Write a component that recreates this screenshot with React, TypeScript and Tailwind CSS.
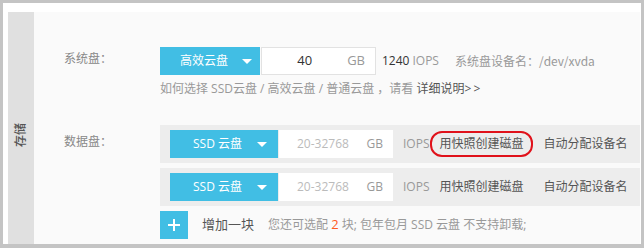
const font = { fontFamily: '"Open Sans", "Noto Sans CJK SC", sans-serif' }

function Caret() {
  return <span className="w-0 h-0 border-l-[5px] border-r-[5px] border-t-[5px] border-l-transparent border-r-transparent border-t-white" />
}

function DataDiskRow({ highlight }: { highlight?: boolean }) {
  return (
    <div className="flex items-center h-[38px] pl-[10px] bg-[#ededed]">
      <div className="flex items-center h-[28px] w-[108px] pl-[23px] bg-[#41bee4] text-white">
        <span>SSD 云盘</span>
        <span className="ml-[15px] flex">
          <Caret />
        </span>
      </div>
      <div className="flex items-center justify-between h-[28px] w-[114px] ml-[1px] pl-[18px] pr-[10px] bg-white">
        <span className="text-[#bbbbbb]">20-32768</span>
        <span className="text-[#999999]">GB</span>
      </div>
      <span className="ml-[10px] text-[#999999]">IOPS</span>
      <span
        className={
          "ml-[1px] flex items-center h-[26px] px-[7px] rounded-[12px] border-2 text-[#555555] " +
          (highlight ? "border-[#e0121b]" : "border-transparent")
        }
      >
        用快照创建磁盘
      </span>
      <span className="ml-[11px] text-[#555555]">自动分配设备名</span>
    </div>
  )
}

export default function App() {
  return (
    <div className="w-[644px] h-[248px] bg-[#c4c4c4] pt-[3px] pl-[3px] pr-[3px] pb-[4px] text-[12px]" style={font}>
      <div className="h-full bg-white pt-[9px] pl-[5px] pr-[1px]">
        <div className="flex h-[232px]">
          {/* side label */}
          <div className="w-[26px] bg-[#e0e0e0] flex flex-col items-center pt-[115px]">
            <span className="-rotate-90 leading-[16px] font-medium text-[#555555]">存储</span>
          </div>

          <div className="flex-1 bg-[#fafafa] pl-[30px] pt-[35px]">
            {/* system disk */}
            <div className="flex">
              <div className="w-[96px] pt-[3px] text-[#888888]">系统盘：</div>
              <div className="flex-1">
                <div className="flex items-center h-[28px]">
                  <div className="flex items-center h-[28px] w-[100px] pl-[20px] bg-[#41bee4] text-white">
                    <span>高效云盘</span>
                    <span className="ml-[14px] flex">
                      <Caret />
                    </span>
                  </div>
                  <div className="flex items-center justify-end h-[28px] w-[115px] ml-[1px] pr-[10px] bg-white border border-[#e2e2e2]">
                    <span className="text-[#333333] text-[13px]">40</span>
                    <span className="ml-[35px] text-[#999999] text-[13px]">GB</span>
                  </div>
                  <span className="ml-[6px] text-[#333333]">1240</span>
                  <span className="ml-[3px] text-[#999999]">IOPS</span>
                  <span className="ml-[16px] text-[#999999] font-['Noto_Sans_CJK_SC',sans-serif]">系统盘设备名：/dev/xvda</span>
                </div>
                <div className="mt-[5px] leading-[18px] text-[#999999]">
                  如何选择 SSD云盘 / 高效云盘 / 普通云盘 ，请看 <span className="text-[#555555]">详细说明</span>
                  <span className="text-[#555555] tracking-[2px]">&gt;&gt;</span>
                </div>
              </div>
            </div>

            {/* data disk */}
            <div className="flex mt-[27px]">
              <div className="w-[96px] pt-[8px] text-[#888888]">数据盘：</div>
              <div className="flex-1 flex flex-col gap-[5px]">
                <DataDiskRow highlight />
                <DataDiskRow />
                <div className="flex items-center h-[28px]">
                  <div className="flex items-center justify-center w-[28px] h-[28px] bg-[#41bee4]">
                    <svg width="14" height="14" viewBox="0 0 14 14">
                      <path d="M7 1v12M1 7h12" stroke="white" strokeWidth="2" />
                    </svg>
                  </div>
                  <span className="ml-[14px] text-[#555555] text-[13px]">增加一块</span>
                  <span className="ml-[14px] text-[#999999]">
                    您还可选配 <span className="text-[#ff5a1f] text-[13px]">2</span> 块; 包年包月 SSD 云盘 不支持卸载;
                  </span>
                </div>
              </div>
            </div>
          </div>
        </div>
      </div>
    </div>
  )
}
